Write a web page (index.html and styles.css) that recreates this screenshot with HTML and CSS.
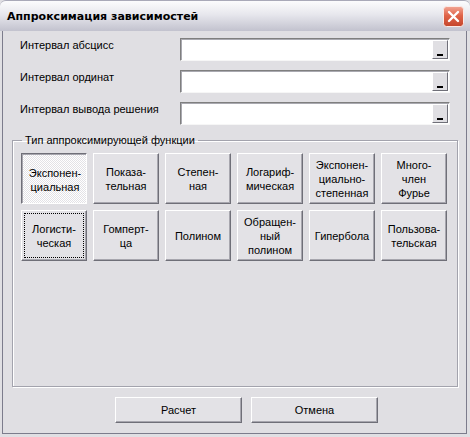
FILE: index.html
```html
<!DOCTYPE html>
<html lang="ru">
<head>
  <meta charset="UTF-8" />
  <title>Аппроксимация зависимостей</title>
  <link rel="stylesheet" href="styles.css">
</head>
<body>

  <div class="window">
    <div class="titlebar">
      <span class="title">Аппроксимация зависимостей</span>
      <button class="close" title="Закрыть">
        <svg width="21" height="21" viewBox="0 0 21 21">
          <defs>
            <linearGradient id="closeFill" x1="0" y1="0" x2="0" y2="1">
              <stop offset="0" stop-color="#f2a594"/>
              <stop offset="0.45" stop-color="#e06449"/>
              <stop offset="1" stop-color="#c5452b"/>
            </linearGradient>
          </defs>
          <rect x="0.5" y="0.5" width="20" height="20" rx="3" fill="url(#closeFill)" stroke="#fbeae6"/>
          <path d="M6 6l9 9M15 6l-9 9" stroke="#fff" stroke-width="2.4" stroke-linecap="round"/>
        </svg>
      </button>
    </div>

    <div class="client">
      <div class="fields">
        <div class="field">
          <label>Интервал абсцисс</label>
          <div class="box"><input type="text"><button class="pick"></button></div>
        </div>
        <div class="field">
          <label>Интервал ординат</label>
          <div class="box"><input type="text"><button class="pick"></button></div>
        </div>
        <div class="field">
          <label>Интервал вывода решения</label>
          <div class="box"><input type="text"><button class="pick"></button></div>
        </div>
      </div>

      <fieldset class="group">
        <legend>Тип аппроксимирующей функции</legend>
        <div class="types">
          <button class="type pressed">Экспонен-<br>циальная</button>
          <button class="type">Показа-<br>тельная</button>
          <button class="type">Степен-<br>ная</button>
          <button class="type">Логариф-<br>мическая</button>
          <button class="type">Экспонен-<br>циально-<br>степенная</button>
          <button class="type">Много-<br>член<br>Фурье</button>
          <button class="type focused">Логисти-<br>ческая</button>
          <button class="type">Гомперт-<br>ца</button>
          <button class="type">Полином</button>
          <button class="type">Обращен-<br>ный<br>полином</button>
          <button class="type">Гипербола</button>
          <button class="type">Пользова-<br>тельская</button>
        </div>
      </fieldset>

      <div class="actions">
        <button class="action">Расчет</button>
        <button class="action">Отмена</button>
      </div>
    </div>
  </div>

</body>
</html>
```

FILE: styles.css
```css
* {
  box-sizing: border-box;
}

body {
  margin: 0;
  background: #e0dfe3;
  color: #000;
  font: 11px "Liberation Sans", Arial, sans-serif;
}

.window {
  width: 470px;
  height: 437px;
  display: flex;
  flex-direction: column;
}

/* заголовок окна */
.titlebar {
  flex: none;
  height: 31px;
  display: flex;
  align-items: center;
  justify-content: space-between;
  padding: 0 6px 0 7px;
  background: linear-gradient(#fcfcfd, #e7e7ed 45%, #c2c2ce);
  border-top: 1px solid #a9a9b8;
  border-radius: 6px 6px 0 0;
}

.title {
  font: bold 11px "DejaVu Sans", sans-serif;
}

.close {
  width: 21px;
  height: 21px;
  padding: 0;
  border: none;
  background: none;
  display: block;
}

.close svg {
  display: block;
}

.client {
  flex: 1;
  display: flex;
  flex-direction: column;
  margin: 0 3px 3px 2px;
  border: 1px solid #7c7c8c;
  border-top: none;
}

/* поля ввода интервалов */
.fields {
  display: flex;
  flex-direction: column;
  gap: 9px;
  padding: 7px 16px 9px 17px;
}

.field {
  display: flex;
  height: 23px;
}

.field label {
  width: 160px;
  line-height: 13px;
  padding-top: 1px;
}

.box {
  flex: 1;
  display: flex;
  padding: 1px;
  background: #fff;
  border: 1px solid;
  border-color: #7f7f7f #f6f6f6 #f6f6f6 #7f7f7f;
  box-shadow: inset 1px 1px #a9a9b0;
}

.box input {
  flex: 1;
  min-width: 0;
  border: none;
  outline: none;
  background: transparent;
  font: inherit;
}

.pick {
  width: 16px;
  padding: 0 0 2px;
  display: flex;
  align-items: flex-end;
  justify-content: center;
  background: #e0dfe3;
  border: 1px solid;
  border-color: #fff #6f6f78 #6f6f78 #fff;
}

.pick::after {
  content: "";
  width: 6px;
  height: 2px;
  background: #000;
}

/* группа кнопок типа функции */
.group {
  flex: 1;
  min-width: 0;
  margin: 0 8px 0 9px;
  padding: 6px 8px 0;
  border: 1px solid #a3a3ad;
  box-shadow: inset 1px 1px #fff, 1px 1px #fff;
}

.group legend {
  margin-left: 1px;
  padding: 0 3px;
  line-height: 13px;
}

.types {
  display: grid;
  grid-template-columns: repeat(6, 66px);
  grid-auto-rows: 51px;
  gap: 6px;
}

.type,
.action {
  padding: 0;
  color: #000;
  font: 11px/14px "Liberation Sans", Arial, sans-serif;
  background: #e3e2e6;
  border: 1px solid;
  border-color: #fff #6f6f78 #6f6f78 #fff;
  box-shadow: inset -1px -1px #a7a6ae;
}

.type.pressed {
  padding: 2px 0 0 2px;
  border-color: #6f6f78 #fff #fff #6f6f78;
  box-shadow: inset 1px 1px #a7a6ae;
  background: repeating-conic-gradient(#fff 0 25%, #e3e2e6 0 50%) 0 0 / 2px 2px;
}

.type.focused {
  outline: 1px dotted #000;
  outline-offset: -4px;
}

.actions {
  flex: none;
  display: flex;
  gap: 9px;
  padding: 10px 0 10px 112px;
}

.action {
  width: 127px;
  height: 26px;
}
```
